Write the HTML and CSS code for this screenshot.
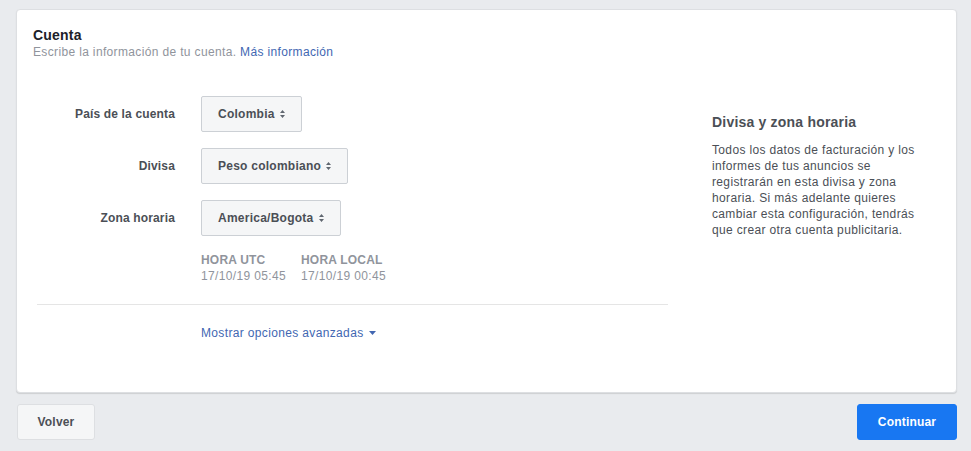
FILE: index.html
```html
<!DOCTYPE html>
<html lang="es">
<head>
<meta charset="utf-8">
<title>Cuenta</title>
<link rel="stylesheet" href="styles.css">
</head>
<body>
<div class="page">
  <section class="card">
    <header class="card-head">
      <h1 class="title">Cuenta</h1>
      <p class="subtitle">Escribe la información de tu cuenta. <a class="link" href="#">Más información</a></p>
    </header>
    <div class="card-body">
      <div class="form-col">
        <div class="rows">
          <div class="row">
            <span class="label">País de la cuenta</span>
            <button class="select">Colombia <svg class="updown" width="5" height="8" viewBox="0 0 5 8"><path d="M2.5 0L5 3H0z M2.5 8L0 5H5z" fill="#606770"/></svg></button>
          </div>
          <div class="row">
            <span class="label">Divisa</span>
            <button class="select">Peso colombiano <svg class="updown" width="5" height="8" viewBox="0 0 5 8"><path d="M2.5 0L5 3H0z M2.5 8L0 5H5z" fill="#606770"/></svg></button>
          </div>
          <div class="row">
            <span class="label">Zona horaria</span>
            <button class="select">America/Bogota <svg class="updown" width="5" height="8" viewBox="0 0 5 8"><path d="M2.5 0L5 3H0z M2.5 8L0 5H5z" fill="#606770"/></svg></button>
          </div>
          <div class="row times-row">
            <span class="label"></span>
            <div class="times">
              <div class="time">
                <div class="time-label">HORA UTC</div>
                <div class="time-value">17/10/19 05:45</div>
              </div>
              <div class="time">
                <div class="time-label">HORA LOCAL</div>
                <div class="time-value">17/10/19 00:45</div>
              </div>
            </div>
          </div>
        </div>
        <div class="divider"></div>
        <div class="row adv-row">
          <span class="label"></span>
          <a class="link adv" href="#">Mostrar opciones avanzadas <svg class="down" width="7" height="4" viewBox="0 0 7 4"><path d="M0 0H7L3.5 4z" fill="#4267b2"/></svg></a>
        </div>
      </div>
      <aside class="info-col">
        <h2 class="info-title">Divisa y zona horaria</h2>
        <p class="info-text">Todos los datos de facturación y los informes de tus anuncios se registrarán en esta divisa y zona horaria. Si más adelante quieres cambiar esta configuración, tendrás que crear otra cuenta publicitaria.</p>
      </aside>
    </div>
  </section>
  <footer class="actions">
    <button class="btn btn-back">Volver</button>
    <button class="btn btn-primary">Continuar</button>
  </footer>
</div>
</body>
</html>
```

FILE: styles.css
```css
* { box-sizing: border-box; }
html, body { margin: 0; padding: 0; }
body {
  background: #e9ebee;
  font-family: "Liberation Sans", Arial, Helvetica, sans-serif;
  color: #1d2129;
  font-size: 12px;
  letter-spacing: 0.35px;
  width: 971px;
  height: 451px;
  overflow: hidden;
}
.page {
  padding: 9px 14px 0 16px;
}
.card {
  background: #fff;
  border: 1px solid #dddfe2;
  border-radius: 4px;
  box-shadow: 0 1px 1px rgba(0,0,0,0.12);
  height: 384px;
  padding: 16px 16px 0 16px;
}
.title {
  margin: 0;
  font-size: 14px;
  line-height: 18px;
  font-weight: bold;
  letter-spacing: 0.2px;
  color: #1d2129;
}
.subtitle {
  margin: 0;
  font-size: 12px;
  line-height: 16px;
  color: #90949c;
}
.link { color: #4267b2; text-decoration: none; }
.card-body {
  display: flex;
  padding-top: 36px;
}
.form-col {
  width: 631px;
  margin-left: 4px;
}
.rows {
  display: flex;
  flex-direction: column;
  gap: 16px;
}
.row {
  display: flex;
  align-items: center;
  gap: 26px;
}
.label {
  width: 138px;
  flex: none;
  text-align: right;
  font-weight: bold;
  letter-spacing: 0.15px;
  color: #4b4f56;
  font-size: 12px;
}
.select {
  height: 36px;
  padding: 0 16px 0 16px;
  background: #f5f6f7;
  border: 1px solid #ccd0d5;
  border-radius: 2px;
  font-family: inherit;
  font-size: 12px;
  font-weight: bold;
  letter-spacing: 0.25px;
  color: #4b4f56;
  display: inline-flex;
  align-items: center;
  gap: 5px;
}
.updown { display: block; }
.times-row { align-items: flex-start; margin-top: 0; }
.times {
  display: flex;
  gap: 15px;
}
.time-label {
  font-weight: bold;
  letter-spacing: 0.2px;
  color: #90949c;
  line-height: 16px;
}
.time-value {
  color: #90949c;
  line-height: 16px;
}
.divider {
  height: 1px;
  background: #e5e5e5;
  margin-top: 20px;
}
.adv-row { margin-top: 20px; }
.adv {
  display: inline-flex;
  align-items: center;
  gap: 5px;
  line-height: 16px;
}
.down { display: block; }
.info-col {
  width: 214px;
  margin-left: 44px;
  padding-top: 17px;
}
.info-title {
  margin: 0;
  font-size: 14px;
  line-height: 18px;
  font-weight: bold;
  letter-spacing: 0.2px;
  color: #4b4f56;
}
.info-text {
  margin: 11px 0 0;
  font-size: 12px;
  line-height: 16px;
  color: #4b4f56;
}
.actions {
  display: flex;
  justify-content: space-between;
  padding: 11px 0 0 1px;
}
.btn {
  height: 36px;
  font-family: inherit;
  font-size: 12px;
  font-weight: bold;
  letter-spacing: 0.2px;
  border-radius: 3px;
}
.btn-back {
  width: 78px;
  background: #f5f6f7;
  border: 1px solid #dddfe2;
  color: #4b4f56;
}
.btn-primary {
  width: 100px;
  background: #1877f2;
  border: 1px solid #1877f2;
  color: #fff;
}
```
